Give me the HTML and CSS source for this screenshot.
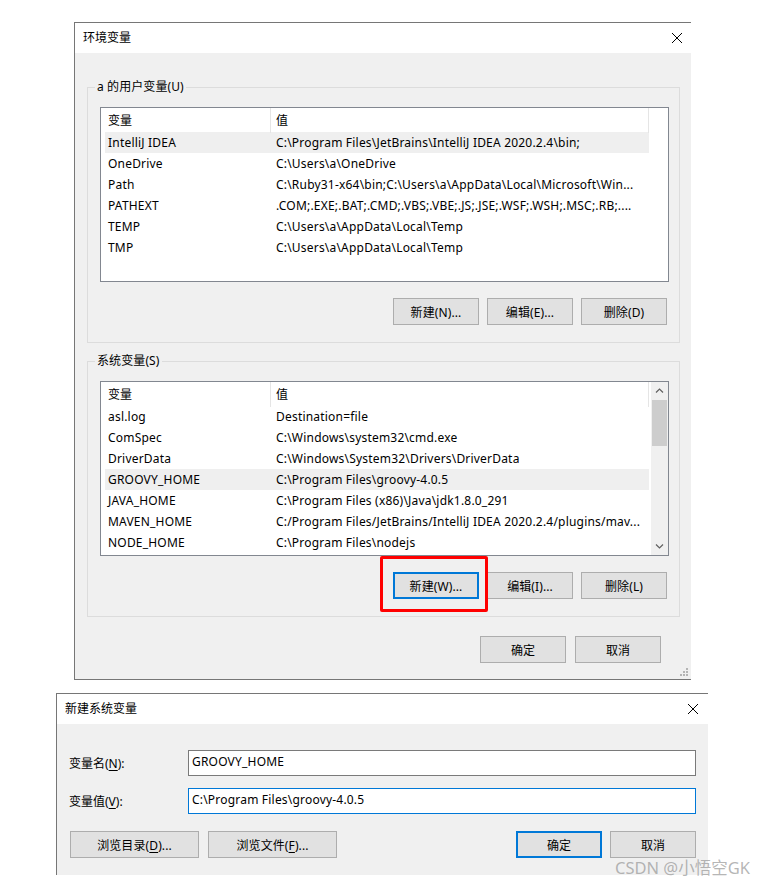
FILE: index.html
```html
<!DOCTYPE html>
<html lang="zh-CN">
<head>
    <meta charset="UTF-8">
    <title>环境变量</title>
    <link rel="stylesheet" href="styles.css">
</head>
<body>
    <div class="screen">
        <!-- Environment variables dialog -->
        <section class="dialog env-dialog">
            <header class="titlebar">
                <span class="title">环境变量</span>
                <svg class="close" width="10" height="10" viewBox="0 0 10 10"><path d="M0 0L10 10M10 0L0 10" stroke="#000" stroke-width="1"/></svg>
            </header>
            <div class="dialog-body">
                <fieldset class="group">
                    <legend>a 的用户变量(U)</legend>
                    <div class="listview">
                        <div class="lv-main">
                            <div class="lv-head"><span>变量</span><span>值</span></div>
                            <div class="lv-row selected"><span>IntelliJ IDEA</span><span>C:\Program Files\JetBrains\IntelliJ IDEA 2020.2.4\bin;</span></div>
                            <div class="lv-row"><span>OneDrive</span><span>C:\Users\a\OneDrive</span></div>
                            <div class="lv-row"><span>Path</span><span>C:\Ruby31-x64\bin;C:\Users\a\AppData\Local\Microsoft\Win...</span></div>
                            <div class="lv-row"><span>PATHEXT</span><span>.COM;.EXE;.BAT;.CMD;.VBS;.VBE;.JS;.JSE;.WSF;.WSH;.MSC;.RB;....</span></div>
                            <div class="lv-row"><span>TEMP</span><span>C:\Users\a\AppData\Local\Temp</span></div>
                            <div class="lv-row"><span>TMP</span><span>C:\Users\a\AppData\Local\Temp</span></div>
                        </div>
                        <div class="lv-gutter"></div>
                    </div>
                    <div class="btn-row">
                        <button class="btn">新建(N)...</button>
                        <button class="btn">编辑(E)...</button>
                        <button class="btn">删除(D)</button>
                    </div>
                </fieldset>

                <fieldset class="group sys">
                    <legend>系统变量(S)</legend>
                    <div class="listview">
                        <div class="lv-main">
                            <div class="lv-head"><span>变量</span><span>值</span></div>
                            <div class="lv-row"><span>asl.log</span><span>Destination=file</span></div>
                            <div class="lv-row"><span>ComSpec</span><span>C:\Windows\system32\cmd.exe</span></div>
                            <div class="lv-row"><span>DriverData</span><span>C:\Windows\System32\Drivers\DriverData</span></div>
                            <div class="lv-row selected"><span>GROOVY_HOME</span><span>C:\Program Files\groovy-4.0.5</span></div>
                            <div class="lv-row"><span>JAVA_HOME</span><span>C:\Program Files (x86)\Java\jdk1.8.0_291</span></div>
                            <div class="lv-row"><span>MAVEN_HOME</span><span>C:/Program Files/JetBrains/IntelliJ IDEA 2020.2.4/plugins/mav...</span></div>
                            <div class="lv-row"><span>NODE_HOME</span><span>C:\Program Files\nodejs</span></div>
                        </div>
                        <div class="scrollbar">
                            <svg class="arrow" width="17" height="17" viewBox="0 0 17 17"><path d="M5 10.5L8.5 7L12 10.5" fill="none" stroke="#606060" stroke-width="1.2"/></svg>
                            <div class="track"><div class="thumb"></div></div>
                            <svg class="arrow" width="17" height="17" viewBox="0 0 17 17"><path d="M5 6.5L8.5 10L12 6.5" fill="none" stroke="#606060" stroke-width="1.2"/></svg>
                        </div>
                    </div>
                    <div class="btn-row">
                        <span class="marked">
                            <button class="btn default">新建(W)...</button>
                        </span>
                        <button class="btn">编辑(I)...</button>
                        <button class="btn">删除(L)</button>
                    </div>
                </fieldset>

                <div class="btn-row footer">
                    <button class="btn">确定</button>
                    <button class="btn">取消</button>
                </div>
                <svg class="grip" width="8" height="8" viewBox="0 0 8 8" fill="#b4b4b4">
                    <rect x="6" y="0" width="2" height="2"/>
                    <rect x="3" y="3" width="2" height="2"/><rect x="6" y="3" width="2" height="2"/>
                    <rect x="0" y="6" width="2" height="2"/><rect x="3" y="6" width="2" height="2"/><rect x="6" y="6" width="2" height="2"/>
                </svg>
            </div>
        </section>

        <!-- New system variable dialog -->
        <section class="dialog new-dialog">
            <header class="titlebar">
                <span class="title">新建系统变量</span>
                <svg class="close" width="10" height="10" viewBox="0 0 10 10"><path d="M0 0L10 10M10 0L0 10" stroke="#000" stroke-width="1"/></svg>
            </header>
            <div class="dialog-body">
                <div class="form">
                    <label>变量名(<u>N</u>):</label>
                    <div class="field">GROOVY_HOME</div>
                    <label>变量值(<u>V</u>):</label>
                    <div class="field focused">C:\Program Files\groovy-4.0.5</div>
                </div>
                <div class="btn-row split">
                    <button class="btn wide">浏览目录(<u>D</u>)...</button>
                    <button class="btn wide">浏览文件(<u>F</u>)...</button>
                    <span class="spacer"></span>
                    <button class="btn default">确定</button>
                    <button class="btn">取消</button>
                </div>
            </div>
        </section>

        <div class="watermark">CSDN @小悟空GK</div>
    </div>
</body>
</html>
```

FILE: styles.css
```css
body {
    margin: 0;
    background: #fff;
    font-family: 'Noto Sans', 'Noto Sans CJK SC', sans-serif;
    font-size: 12px;
    color: #000;
}

.screen {
    position: relative;
    width: 766px;
    height: 884px;
    padding-top: 22px;
    box-sizing: border-box;
}

/* Dialog frame */
.dialog {
    border-top: 1px solid #767676;
    border-left: 1px solid #767676;
    background: #f0f0f0;
}

.env-dialog {
    width: 616px;
    margin-left: 74px;
    border-bottom: 1px solid #767676;
}

.new-dialog {
    width: 651px;
    margin: 13px 0 0 56px;
}

.titlebar {
    height: 30px;
    background: #fff;
    display: flex;
    align-items: center;
    justify-content: space-between;
    padding: 0 9px 0 8px;
}

.new-dialog .titlebar {
    padding: 0 10px 0 8px;
}

.title {
    line-height: 16px;
}

.dialog-body {
    position: relative;
}

.env-dialog .dialog-body {
    padding: 26px 11px 16px 12px;
}

/* Group boxes */
.group {
    margin: 0;
    padding: 12px 10px 17px 12px;
    border: 1px solid #dcdcdc;
    min-inline-size: 0;
}

.group legend {
    padding: 0 2px;
    margin-left: -5px;
    line-height: 16px;
    letter-spacing: 0.1px;
}

.group.sys {
    margin-top: 10px;
}

/* List views */
.listview {
    height: 175px;
    box-sizing: border-box;
    border: 1px solid #828790;
    background: #fff;
    display: flex;
    overflow: hidden;
}

.lv-main {
    flex: 1;
    overflow: hidden;
}

.lv-gutter {
    width: 17px;
}

.lv-head {
    display: grid;
    grid-template-columns: 170px 378px;
    height: 24px;
    line-height: 25px;
}

.lv-head span {
    border-right: 1px solid #e5e5e5;
    padding-left: 7px;
}

.lv-head span + span {
    padding-left: 5px;
}

.lv-row {
    display: grid;
    grid-template-columns: 165px 1fr;
    width: 544px;
    margin-left: 4px;
    height: 21px;
    line-height: 21px;
    white-space: nowrap;
    letter-spacing: 0.2px;
}

.lv-row span {
    overflow: hidden;
    padding-left: 3px;
}

.lv-row span + span {
    padding-left: 6px;
}

.lv-row.selected {
    background: #efefef;
}

.scrollbar {
    width: 17px;
    background: #f0f0f0;
    display: flex;
    flex-direction: column;
}

.scrollbar .arrow {
    display: block;
    flex: none;
}

.track {
    flex: 1;
    padding: 1px 1px 0;
}

.thumb {
    height: 46px;
    background: #cdcdcd;
}

/* Buttons */
.btn-row {
    display: flex;
    justify-content: flex-end;
    gap: 8px;
    margin: 16px 2px 0 0;
}

.btn {
    width: 86px;
    height: 27px;
    box-sizing: border-box;
    background: #e1e1e1;
    border: 1px solid #adadad;
    font: inherit;
    color: #000;
    padding: 0;
    letter-spacing: 0.1px;
}

.btn.default {
    border: 2px solid #0078d7;
}

.btn u {
    text-decoration-thickness: 1px;
    text-underline-offset: 2px;
}

.marked {
    position: relative;
    display: flex;
}

.marked::after {
    content: '';
    position: absolute;
    left: -13px;
    top: -16px;
    right: -9px;
    bottom: -13px;
    border: 3px solid #f00;
    border-radius: 2px;
}

.footer {
    margin: 19px 19px 0 0;
    gap: 9px;
}

.grip {
    position: absolute;
    right: 3px;
    bottom: 3px;
}

/* New variable form */
.new-dialog .dialog-body {
    padding: 26px 12px 17px 12px;
}

.form {
    display: grid;
    grid-template-columns: 119px 508px;
    row-gap: 12px;
    align-items: center;
}

.form u {
    text-underline-offset: 2px;
}

.field {
    height: 26px;
    box-sizing: border-box;
    border: 1px solid #7a7a7a;
    background: #fff;
    padding-left: 3px;
    line-height: 22px;
    white-space: nowrap;
    letter-spacing: 0.2px;
}

.field.focused {
    border-color: #0078d7;
}

.btn-row.split {
    margin: 17px 0 0 1px;
    justify-content: flex-start;
}

.btn.wide {
    width: 129px;
    margin-right: 1px;
}

.spacer {
    flex: 1;
}

.watermark {
    position: absolute;
    left: 615px;
    top: 855px;
    font-size: 16.5px;
    color: rgba(150, 150, 150, 0.7);
    white-space: nowrap;
}
```
